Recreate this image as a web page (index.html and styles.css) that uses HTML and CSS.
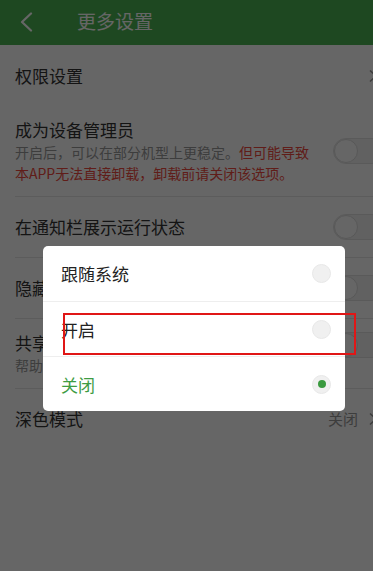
FILE: index.html
```html
<!DOCTYPE html>
<html lang="zh-CN">
<head>
<meta charset="utf-8">
<title>更多设置</title>
<link rel="stylesheet" href="styles.css">
</head>
<body>
<div class="page">
  <header class="topbar">
    <svg class="back" width="14" height="20" viewBox="0 0 14 20"><path d="M12 1.5 L3 10 L12 18.5" fill="none" stroke="#fff" stroke-width="2.2" stroke-linecap="round" stroke-linejoin="round"/></svg>
    <h1 class="title">更多设置</h1>
  </header>

  <div class="list">
    <div class="row row-single">
      <span class="label">权限设置</span>
      <svg class="chev" width="10" height="14" viewBox="0 0 10 14"><path d="M2 1.5 L8 7 L2 12.5" fill="none" stroke="#999" stroke-width="1.6"/></svg>
    </div>
    <div class="row row-multi">
      <div class="text">
        <div class="label">成为设备管理员</div>
        <div class="desc">开启后，可以在部分机型上更稳定。<span class="warn">但可能导致本APP无法直接卸载，卸载前请关闭该选项。</span></div>
      </div>
      <span class="toggle"><span class="knob"></span></span>
    </div>
    <div class="row row-single divided">
      <span class="label">在通知栏展示运行状态</span>
      <span class="toggle"><span class="knob"></span></span>
    </div>
    <div class="row row-single divided">
      <span class="label">隐藏后台运行任务</span>
      <span class="toggle"><span class="knob"></span></span>
    </div>
    <div class="row row-multi row-share divided">
      <div class="text">
        <div class="label">共享使用数据</div>
        <div class="desc">帮助我们改进产品体验</div>
      </div>
      <span class="toggle"><span class="knob"></span></span>
    </div>
    <div class="row row-single row-dark divided">
      <span class="label">深色模式</span>
      <span class="value">关闭</span>
      <svg class="chev" width="10" height="14" viewBox="0 0 10 14"><path d="M2 1.5 L8 7 L2 12.5" fill="none" stroke="#999" stroke-width="1.6"/></svg>
    </div>
  </div>

  <div class="mask"></div>

  <div class="dialog">
    <div class="option">
      <span class="opt-text">跟随系统</span>
      <span class="radio"></span>
    </div>
    <div class="option">
      <span class="opt-text">开启</span>
      <span class="radio"></span>
    </div>
    <div class="option selected">
      <span class="opt-text">关闭</span>
      <span class="radio"><span class="dot"></span></span>
    </div>
  </div>

  <div class="highlight"></div>
</div>
</body>
</html>
```

FILE: styles.css
```css
* { box-sizing: border-box; margin: 0; padding: 0; }

html, body {
  width: 373px;
  height: 571px;
  overflow: hidden;
  background: #fff;
}

body {
  font-family: "Noto Sans CJK SC", "Noto Sans", sans-serif;
  color: #333;
}

.page {
  position: relative;
  width: 373px;
  height: 571px;
  overflow: hidden;
}

.topbar {
  height: 45px;
  background: #4db554;
  display: flex;
  align-items: center;
}

.back {
  margin-left: 19px;
  margin-top: -2px;
}

.title {
  margin-left: 44px;
  font-size: 19px;
  font-weight: normal;
  color: #fff;
  line-height: 1;
  margin-top: -4px;
}

.list {
  display: flex;
  flex-direction: column;
}

.row {
  display: flex;
  align-items: center;
  padding-left: 15px;
  position: relative;
}

.row.divided::before {
  content: "";
  position: absolute;
  left: 15px;
  right: 0;
  top: 0;
  height: 1px;
  background: #e6e6e6;
}

.row-single {
  height: 61px;
}

.row-multi {
  padding-top: 12px;
  padding-bottom: 12px;
  height: 90px;
  align-items: center;
}

.row-share {
  height: 60px;
  padding-top: 1px;
  padding-bottom: 0;
  align-items: flex-start;
}

.row-share .text {
  padding-top: 12px;
}

.row-share .toggle {
  margin-top: 13px;
}

.row-dark {
  margin-top: 10px;
}

.text {
  flex: 1;
  min-width: 0;
}

.label {
  font-size: 17px;
  line-height: 24px;
  color: #333;
  flex: 1;
  white-space: nowrap;
}

.desc {
  font-size: 14px;
  line-height: 21px;
  color: #999;
  width: 305px;
}

.row-share .desc {
  white-space: nowrap;
}

.warn {
  color: #ef4a40;
}

.chev {
  margin-right: -5px;
  flex: none;
}

.value {
  font-size: 15px;
  color: #999;
  margin-right: 10px;
}

.toggle {
  flex: none;
  width: 52px;
  height: 26px;
  margin-right: -12px;
  border-radius: 13px;
  background: #f2f2f2;
  border: 1px solid #e2e2e2;
  position: relative;
  margin-left: 16px;
}

.knob {
  position: absolute;
  left: 0;
  top: 0;
  width: 24px;
  height: 24px;
  border-radius: 50%;
  background: #fff;
  border: 1px solid #dcdcdc;
}

.mask {
  position: absolute;
  inset: 0;
  background: rgba(0, 0, 0, 0.6);
}

.dialog {
  position: absolute;
  left: 43px;
  top: 246px;
  width: 302px;
  background: #fff;
  border-radius: 5px;
  display: flex;
  flex-direction: column;
  overflow: hidden;
}

.option {
  height: 55px;
  display: flex;
  align-items: center;
  padding-left: 18px;
  padding-right: 14px;
}

.option + .option {
  border-top: 1px solid #eeeeee;
}

.opt-text {
  flex: 1;
  font-size: 17px;
  color: #222;
}

.selected .opt-text {
  color: #3e9c43;
}

.radio {
  width: 19px;
  height: 19px;
  border-radius: 50%;
  background: #f0f0f0;
  border: 1px solid #e8e8e8;
  display: flex;
  align-items: center;
  justify-content: center;
}

.dot {
  width: 8px;
  height: 8px;
  border-radius: 50%;
  background: #3a9a3f;
}

.highlight {
  position: absolute;
  left: 63px;
  top: 313px;
  width: 293px;
  height: 42px;
  border: 2px solid #e01616;
}
```
